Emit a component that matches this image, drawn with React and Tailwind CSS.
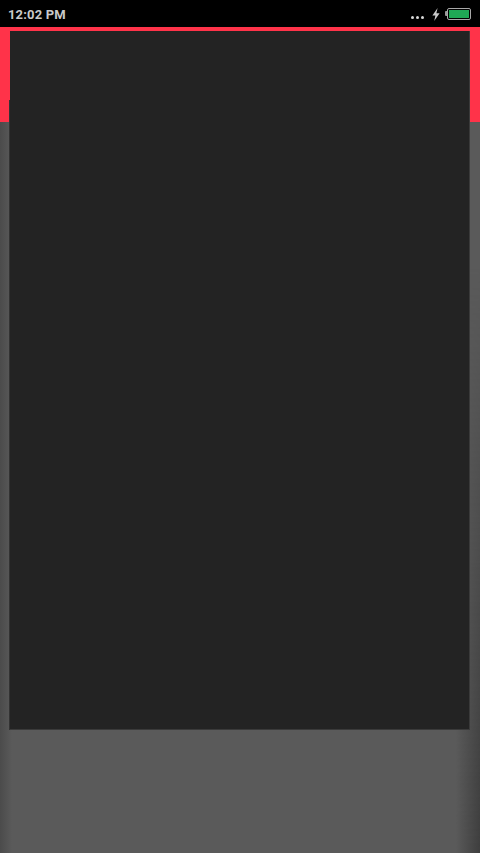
export default function App() {
  return (
    <div className="relative w-[480px] h-[853px] overflow-hidden flex flex-col bg-[#5a5a5a]" style={{ fontFamily: 'Roboto, sans-serif' }}>
      <div className="h-[27px] bg-black flex items-center justify-between pl-[8px] pr-[9px]">
        <span className="text-[13px] font-bold text-[#c9c9c9] leading-none tracking-[0.15px] mt-[1px]">12:02 PM</span>
        <div className="flex items-center">
          <div className="flex gap-[1.5px] mt-[8px] mr-[8px]">
            <span className="w-[3.5px] h-[3.5px] rounded-full bg-[#d8d8d8]"></span>
            <span className="w-[3.5px] h-[3.5px] rounded-full bg-[#d8d8d8]"></span>
            <span className="w-[3.5px] h-[3.5px] rounded-full bg-[#d8d8d8]"></span>
          </div>
          <svg width="8" height="13" viewBox="0 0 8 13" className="mr-[5px] mt-[1px]">
            <path d="M5.6 0 L0.4 7.4 H3.4 L2.2 13 L7.6 5.2 H4.4 Z" fill="#c9c9c9" />
          </svg>
          <div className="flex items-center">
            <div className="w-[2px] h-[5px] bg-[#9a9a9a] rounded-l-[1px]"></div>
            <div className="w-[24px] h-[12px] border border-[#a8a8a8] rounded-[2px] p-[1px]">
              <div className="w-full h-full bg-[#1fa855]"></div>
            </div>
          </div>
        </div>
      </div>
      <div className="h-[95px] bg-[#ff3349]"></div>
      <div className="flex-1 bg-[#5a5a5a]"></div>
      <div className="absolute left-0 top-[122px] bottom-0 w-[12px] bg-gradient-to-r from-[#4b4b4b] to-[#5a5a5a]"></div>
      <div className="absolute right-0 top-[122px] bottom-0 w-[24px] bg-gradient-to-l from-[#3e3e3e] to-[#5a5a5a] [mask-image:linear-gradient(to_bottom,transparent_20%,black_100%)]"></div>
      <div className="absolute left-[10px] top-[31px] w-[460px] h-[699px] bg-[#232323] border-r border-b border-[#3a3a3a]">
        <div className="absolute -left-px top-[69px] bottom-[-1px] w-px bg-[#333333]"></div>
      </div>
    </div>
  );
}
